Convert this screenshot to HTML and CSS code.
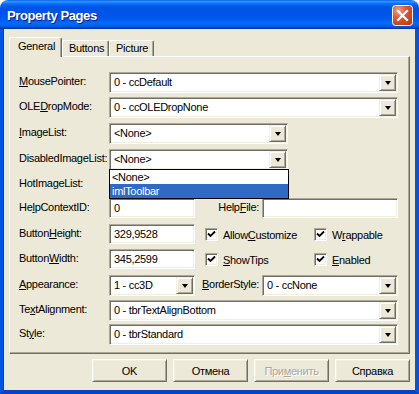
FILE: index.html
```html
<!DOCTYPE html>
<html>
<head>
<meta charset="utf-8">
<link rel="stylesheet" href="styles.css">
</head>
<body>
<div class="window">
  <div class="titlebar">
    <span class="title">Property Pages</span>
    <span class="close">
      <svg width="21" height="21" viewBox="0 0 21 21">
        <defs>
          <radialGradient id="cg" cx="0.3" cy="0.25" r="0.9">
            <stop offset="0" stop-color="#F3A088"/>
            <stop offset="0.45" stop-color="#E0532D"/>
            <stop offset="1" stop-color="#C1391A"/>
          </radialGradient>
        </defs>
        <rect x="0.5" y="0.5" width="20" height="20" rx="3" ry="3" fill="url(#cg)" stroke="#FFFFFF" stroke-width="1"/>
        <path d="M6 6 L15 15 M15 6 L6 15" stroke="#FFFFFF" stroke-width="2.2" stroke-linecap="square"/>
      </svg>
    </span>
  </div>
  <div class="client">
    <div class="tabs">
      <div class="tab sel">General</div>
      <div class="tab">Buttons</div>
      <div class="tab">Picture</div>
    </div>
    <div class="panel">
      <div class="form">
        <label class="lbl"><u>M</u>ousePointer:</label>
        <div class="combo full"><span class="val">0 - ccDefault</span><span class="drop"><i class="tri"></i></span></div>

        <label class="lbl">OLE<u>D</u>ropMode:</label>
        <div class="combo full"><span class="val">0 - ccOLEDropNone</span><span class="drop"><i class="tri"></i></span></div>

        <label class="lbl"><u>I</u>mageList:</label>
        <div class="combo mid"><span class="val">&lt;None&gt;</span><span class="drop"><i class="tri"></i></span></div>

        <label class="lbl">DisabledImageList:</label>
        <div class="combo mid open"><span class="val">&lt;None&gt;</span><span class="drop"><i class="tri"></i></span>
          <div class="list">
            <div class="item">&lt;None&gt;</div>
            <div class="item hl">imlToolbar</div>
          </div>
        </div>

        <label class="lbl">HotImageList:</label>
        <div class="combo mid"><span class="val"></span><span class="drop"><i class="tri"></i></span></div>

        <label class="lbl">He<u>l</u>pContextID:</label>
        <div class="text c2"><span class="val">0</span></div>
        <label class="lbl r c3">Help<u>F</u>ile:</label>
        <div class="text c4"></div>

        <label class="lbl">Button<u>H</u>eight:</label>
        <div class="text c2"><span class="val">329,9528</span></div>
        <div class="checks">
          <span class="chk"><span class="box"><svg width="9" height="9" viewBox="0 0 9 9"><path d="M1 3.5 L3.5 6 L8 1.5" fill="none" stroke="#000" stroke-width="1.8"/></svg></span>Allow<u>C</u>ustomize</span>
          <span class="chk"><span class="box"><svg width="9" height="9" viewBox="0 0 9 9"><path d="M1 3.5 L3.5 6 L8 1.5" fill="none" stroke="#000" stroke-width="1.8"/></svg></span>W<u>r</u>appable</span>
        </div>

        <label class="lbl">Button<u>W</u>idth:</label>
        <div class="text c2"><span class="val">345,2599</span></div>
        <div class="checks">
          <span class="chk"><span class="box"><svg width="9" height="9" viewBox="0 0 9 9"><path d="M1 3.5 L3.5 6 L8 1.5" fill="none" stroke="#000" stroke-width="1.8"/></svg></span><u>S</u>howTips</span>
          <span class="chk"><span class="box"><svg width="9" height="9" viewBox="0 0 9 9"><path d="M1 3.5 L3.5 6 L8 1.5" fill="none" stroke="#000" stroke-width="1.8"/></svg></span><u>E</u>nabled</span>
        </div>

        <label class="lbl"><u>A</u>ppearance:</label>
        <div class="combo c2"><span class="val">1 - cc3D</span><span class="drop"><i class="tri"></i></span></div>
        <label class="lbl r c3"><u>B</u>orderStyle:</label>
        <div class="combo c4"><span class="val">0 - ccNone</span><span class="drop"><i class="tri"></i></span></div>

        <label class="lbl">Te<u>x</u>tAlignment:</label>
        <div class="combo full"><span class="val">0 - tbrTextAlignBottom</span><span class="drop"><i class="tri"></i></span></div>

        <label class="lbl">St<u>y</u>le:</label>
        <div class="combo full"><span class="val">0 - tbrStandard</span><span class="drop"><i class="tri"></i></span></div>
      </div>
    </div>
    <div class="actions">
      <button class="btn def">OK</button>
      <button class="btn">Отмена</button>
      <button class="btn dis">При<u>м</u>енить</button>
      <button class="btn">Справка</button>
    </div>
  </div>
</div>
</body>
</html>
```

FILE: styles.css
```css
html, body {
  margin: 0;
  padding: 0;
  background: #FFFFFF;
}

body {
  width: 419px;
  height: 394px;
  overflow: hidden;
  font-family: "Liberation Sans", Arial, sans-serif;
  font-size: 11px;
  letter-spacing: -0.3px;
  color: #000000;
}

.window {
  width: 419px;
  height: 394px;
  display: flex;
  flex-direction: column;
}

.titlebar {
  height: 29px;
  flex: none;
  border-radius: 8px 8px 0 0;
  background: linear-gradient(to bottom,
    #0058EE 0%, #3593FF 4%, #288EFF 7%, #127DFF 10%, #036FFC 14%,
    #0262EE 18%, #0057E5 24%, #0054E3 30%, #0055EB 56%, #005BF5 68%,
    #026AFE 80%, #0062EF 88%, #0052D6 93%, #0040AB 97%, #003092 100%);
  display: flex;
  align-items: center;
  justify-content: space-between;
  padding: 0 6px 0 7px;
  box-sizing: border-box;
}

.title {
  color: #FFFFFF;
  font-family: "Liberation Sans", Arial, sans-serif;
  font-weight: bold;
  font-size: 13px;
  letter-spacing: -0.4px;
  text-shadow: 1px 1px 0 #0A1E8C;
  margin-top: 1px;
}

.close {
  width: 21px;
  height: 21px;
  display: block;
  margin-top: 1px;
}

.close svg {
  display: block;
}

.client {
  flex: 1;
  background: #ECE9D8;
  border-left: 3px solid #0553E4;
  border-right: 4px solid #0553E4;
  border-bottom: 4px solid #0841C8;
  box-shadow: inset 1px 0 0 #0A3EC0;
  display: flex;
  flex-direction: column;
  padding-top: 8px;
}

.tabs {
  display: flex;
  align-items: flex-end;
  height: 19px;
  margin-left: 6px;
  position: relative;
  z-index: 2;
}

.tab {
  box-sizing: border-box;
  height: 16px;
  padding: 0 5px 0 6px;
  line-height: 14px;
  background: #ECE9D8;
  border-top: 1px solid #FFFFFF;
  border-left: 1px solid #FFFFFF;
  border-right: 1px solid #716F64;
  box-shadow: inset -1px 0 0 #ACA899;
  border-radius: 2px 2px 0 0;
}

.tab.sel {
  height: 20px;
  margin-bottom: -1px;
  padding: 0 8px 0 8px;
  line-height: 17px;
  width: 53px;
}

.tab:nth-child(2) { width: 47px; }
.tab:nth-child(3) { width: 45px; }

.panel {
  margin: 0 5px 0 6px;
  border-top: 1px solid #FFFFFF;
  border-left: 1px solid #FFFFFF;
  border-right: 1px solid #716F64;
  border-bottom: 1px solid #716F64;
  box-shadow: inset -1px -1px 0 #ACA899;
  padding: 15px 0 8px 9px;
  background: #ECE9D8;
  position: relative;
  z-index: 1;
}

.form {
  display: grid;
  grid-template-columns: 90px 86px 67px 136px;
  grid-template-rows: 25px 26px 26px 25px 24px 26px 25px 26px 25px 24px 21px;
  align-items: start;
}

.lbl {
  grid-column: 1;
  height: 21px;
  line-height: 19px;
  white-space: nowrap;
}

.lbl.r {
  text-align: right;
  padding-right: 3px;
}

.c2 { grid-column: 2; }
.c3 { grid-column: 3; }
.c4 { grid-column: 4; }
.full { grid-column: 2 / 5; }
.mid { grid-column: 2 / 5; width: 179px; }

.combo, .text {
  box-sizing: border-box;
  height: 21px;
  background: #FFFFFF;
  border-top: 1px solid #ACA899;
  border-left: 1px solid #ACA899;
  border-right: 1px solid #FFFFFF;
  border-bottom: 1px solid #FFFFFF;
  box-shadow: inset 1px 1px 0 #716F64, inset -1px -1px 0 #F1EFE2;
  display: flex;
  align-items: center;
  padding: 1px 1px 1px 1px;
  position: relative;
}

.text {
  height: 20px;
}

.val {
  flex: 1;
  padding-left: 3px;
  white-space: nowrap;
  overflow: hidden;
  line-height: 17px;
}

.drop {
  box-sizing: border-box;
  width: 17px;
  height: 17px;
  flex: none;
  background: #ECE9D8;
  border-top: 1px solid #F1EFE2;
  border-left: 1px solid #F1EFE2;
  border-right: 1px solid #716F64;
  border-bottom: 1px solid #716F64;
  box-shadow: inset 1px 1px 0 #FFFFFF, inset -1px -1px 0 #ACA899;
  display: flex;
  align-items: center;
  justify-content: center;
}

.tri {
  width: 0;
  height: 0;
  border-left: 3.5px solid transparent;
  border-right: 3.5px solid transparent;
  border-top: 4px solid #000000;
  margin-top: 1px;
}

.list {
  position: absolute;
  left: -1px;
  top: 19px;
  width: 180px;
  box-sizing: border-box;
  border: 1px solid #000000;
  background: #FFFFFF;
  z-index: 5;
  padding: 0;
}

.item {
  height: 14px;
  line-height: 14px;
  padding-left: 2px;
  white-space: nowrap;
}

.item.hl {
  height: 14px;
  background: #316AC5;
  color: #FFFFFF;
}

.open {
  z-index: 5;
}

.checks {
  grid-column: 3 / 5;
  height: 21px;
  display: grid;
  grid-template-columns: 109px auto;
  padding-left: 10px;
  align-items: center;
}

.chk {
  display: flex;
  align-items: center;
  white-space: nowrap;
}

.box {
  box-sizing: border-box;
  width: 13px;
  height: 13px;
  background: #FFFFFF;
  border-top: 1px solid #ACA899;
  border-left: 1px solid #ACA899;
  border-right: 1px solid #FFFFFF;
  border-bottom: 1px solid #FFFFFF;
  box-shadow: inset 1px 1px 0 #716F64, inset -1px -1px 0 #F1EFE2;
  display: flex;
  align-items: center;
  justify-content: center;
  margin-right: 5px;
  flex: none;
}

.box svg {
  display: block;
}

.actions {
  display: flex;
  justify-content: flex-end;
  gap: 6px;
  padding-right: 5px;
  margin-top: 5px;
}

.btn {
  box-sizing: border-box;
  width: 75px;
  height: 23px;
  font-family: "Liberation Sans", Arial, sans-serif;
  font-size: 11px;
  letter-spacing: -0.3px;
  color: #000000;
  background: #ECE9D8;
  border-top: 1px solid #FFFFFF;
  border-left: 1px solid #FFFFFF;
  border-right: 1px solid #716F64;
  border-bottom: 1px solid #716F64;
  box-shadow: inset 1px 1px 0 #F1EFE2, inset -1px -1px 0 #ACA899;
  padding: 0;
  margin: 0;
}

.btn.dis {
  color: #ACA899;
  text-shadow: 1px 1px 0 #FFFFFF;
}
```
